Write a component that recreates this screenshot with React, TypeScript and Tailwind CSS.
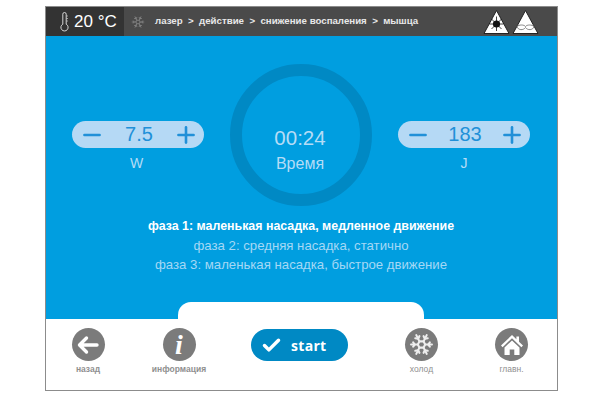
import React from 'react';
import { Check, Minus, Plus, Snowflake } from 'lucide-react';

const sans = { fontFamily: '"Liberation Sans", Arial, sans-serif' };

const Stepper = ({ value, unit, nudge }: { value: string; unit: string; nudge: string }) => (
  <div className="flex flex-col items-center w-[132px] mt-[57px]">
    <div className="w-full h-[27px] rounded-full bg-[#b5d9f5] flex items-center justify-between pl-[7px] pr-[5px] text-[#2190d8]">
      <Minus size={26} strokeWidth={2.4} />
      <span className="text-[20px] leading-none -mt-[2px]">{value}</span>
      <Plus size={26} strokeWidth={2.4} />
    </div>
    <div className={`mt-[7px] text-[14px] leading-[16px] text-[#b5dcf6] ${nudge}`}>{unit}</div>
  </div>
);

const WarnIcon = ({ children }: { children: React.ReactNode }) => (
  <svg width="27" height="26" viewBox="0 0 27 26">
    <path d="M13.5 1.5 L26 24.5 H1 Z" fill="#fff" stroke="#222" strokeWidth="1" strokeLinejoin="round" />
    {children}
  </svg>
);

const FootButton = ({ label, w, thin, children }: { label: string; w: string; thin?: boolean; children: React.ReactNode }) => (
  <div className={`flex flex-col items-center ${w}`}>
    <div className="w-[33px] h-[33px] rounded-full bg-[#7b7b7b] flex items-center justify-center text-white">
      {children}
    </div>
    <div className={`mt-[3px] text-[8.5px] leading-[10px] text-[#8f8f8f] whitespace-nowrap ${thin ? 'font-normal' : 'font-bold'}`}>{label}</div>
  </div>
);

export default function App() {
  return (
    <div className="w-[600px] h-[400px] bg-white pt-[6px] pl-[45px]" style={sans}>
      <div className="w-[513px] h-[385px] border border-[#8c8c8c] flex flex-col">
        {/* header */}
        <div className="h-[29px] bg-[#4a4a4a] flex items-center shrink-0">
          <div className="w-[78px] h-full bg-[#333333] flex items-center pl-[14px] text-white">
            <svg width="9" height="20" viewBox="0 0 9 20" fill="none" stroke="#e5e5e5" strokeWidth="0.9" className="mr-[5px]">
              <path d="M2.8 12.2V2.2a1.7 1.7 0 0 1 3.4 0v10a3.6 3.6 0 1 1-3.4 0Z" />
              <path d="M6.5 4H8M6.5 6.5H8M6.5 9H8" strokeWidth="0.6" />
            </svg>
            <span className="text-[17px] leading-none whitespace-nowrap">20 °C</span>
          </div>
          <Snowflake size={14} strokeWidth={1.2} className="ml-[7px] text-[#8f8f8f]" />
          <div className="ml-[10px] text-[9.7px] font-bold text-[#e8e8e8] whitespace-nowrap">
            лазер &nbsp;&gt;&nbsp; действие &nbsp;&gt;&nbsp; снижение воспаления &nbsp;&gt;&nbsp; мышца
          </div>
          <div className="ml-auto mr-[18px] flex items-center gap-[2px]">
            <WarnIcon>
              <circle cx="13.5" cy="15" r="3.6" fill="#111" />
              <path d="M13.5 7.5V22M6.5 15H20.5M8.5 10L18.5 20M18.5 10L8.5 20" stroke="#111" strokeWidth="0.8" />
            </WarnIcon>
            <WarnIcon>
              <path d="M5 17.5C7 15.5 12 15.5 13.5 17.5C15 15.5 20 15.5 22 17.5C21 21.5 15.5 21.5 13.5 18.5C11.5 21.5 6 21.5 5 17.5Z" fill="none" stroke="#777" strokeWidth="0.9" />
            </WarnIcon>
          </div>
        </div>

        {/* main */}
        <div className="h-[283px] bg-[#009ee0] flex flex-col items-center shrink-0">
          <div className="w-full flex justify-between pl-[26px] pr-[27px] pt-[28px]">
            <Stepper value="7.5" unit="W" nudge="-ml-[3px]" />
            <div className="w-[142px] h-[142px] rounded-full border-[12px] border-[#0089c4] flex flex-col items-center justify-center text-[#b5dcf6] pt-[28px]">
              <div className="text-[20.5px] leading-[24px] -ml-[2px]">00:24</div>
              <div className="text-[16px] leading-[18px] mt-[5px] -ml-[2px]">Время</div>
            </div>
            <Stepper value="183" unit="J" nudge="" />
          </div>
          <div className="mt-[11px] flex flex-col items-center text-[13.2px] leading-[19px] text-[#a5d8f5] -ml-[1px]">
            <div className="font-bold text-white text-[12.4px]">фаза 1: маленькая насадка, медленное движение</div>
            <div>фаза 2: средняя насадка, статично</div>
            <div>фаза 3: маленькая насадка, быстрое движение</div>
          </div>
          <div className="mt-auto -ml-[2px] w-[246px] h-[17px] bg-white rounded-t-[13px]" />
        </div>

        {/* footer */}
        <div className="flex-1 bg-white flex items-start pt-[9px] pl-[6px]">
          <FootButton label="назад" w="w-[72px]">
            <svg width="24" height="20" viewBox="0 0 24 20" fill="none" stroke="#fff" strokeWidth="3.4" strokeLinecap="round" strokeLinejoin="round">
              <path d="M21 10H4M10.5 3L3.5 10L10.5 17" />
            </svg>
          </FootButton>
          <div className="ml-[29px]">
            <FootButton label="информация" w="w-[52px]">
              <span className="text-[28px] leading-none font-bold italic" style={{ fontFamily: '"Liberation Serif", serif' }}>i</span>
            </FootButton>
          </div>
          <div className="ml-[46px] mt-[1px] w-[97px] h-[32px] rounded-full bg-[#0089c4] flex items-center text-white pl-[10px]">
            <Check size={21} strokeWidth={4} />
            <span className="ml-[9px] text-[14px] font-bold tracking-[0.3px]" style={{ fontFamily: '"Open Sans", sans-serif' }}>start</span>
          </div>
          <div className="ml-[57px]">
            <FootButton label="холод" w="w-[33px]" thin>
              <Snowflake size={25} strokeWidth={2} className="text-[#eeeeee]" />
            </FootButton>
          </div>
          <div className="ml-[57px]">
            <FootButton label="главн." w="w-[33px]" thin>
              <svg width="24" height="22" viewBox="0 0 24 22" fill="#fff">
                <path d="M12 1L1 11.5L2.6 13.2L12 4.2L21.4 13.2L23 11.5L19 7.7V2.5H16.4V5.2Z" />
                <path d="M4.5 13.6L12 6.4L19.5 13.6V21H14.3V15.4H9.7V21H4.5Z" />
              </svg>
            </FootButton>
          </div>
        </div>
      </div>
    </div>
  );
}
